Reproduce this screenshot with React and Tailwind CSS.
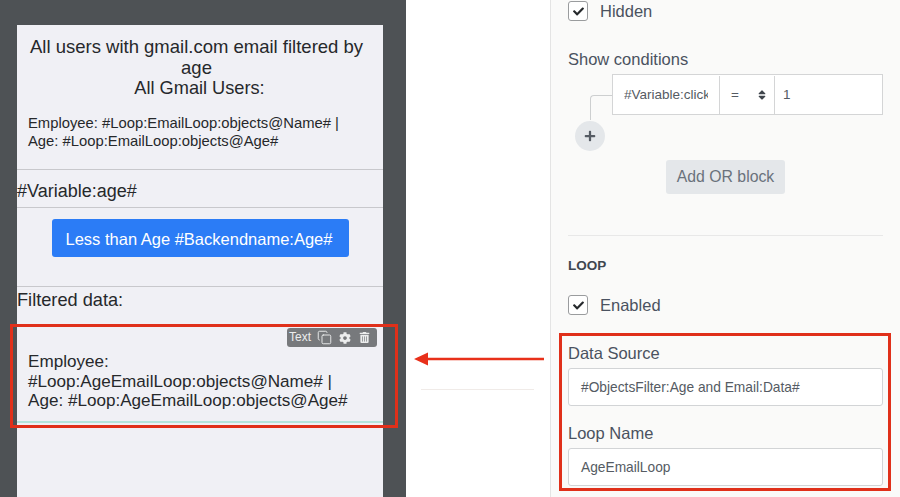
import React from 'react';
import { Copy } from 'lucide-react';
import { FaCheck, FaCog, FaPlus, FaSort, FaTrashAlt } from 'react-icons/fa';

const font = { fontFamily: '"Liberation Sans", Arial, sans-serif' };

const CheckRow = ({ label, className }) => (
  <div className={`flex items-center gap-3 ${className}`}>
    <div className="flex h-5 w-5 items-center justify-center rounded-[3px] border border-[#9a9c9e] bg-white">
      <FaCheck size={11} className="text-[#26292c]" />
    </div>
    <span className="text-[16.5px] leading-5 text-[#4a5260]">{label}</span>
  </div>
);

const Field = ({ label, value, className }) => (
  <div className={className}>
    <div className="text-[16.5px] leading-5 text-[#4a5260]">{label}</div>
    <div className="mt-[5px] flex h-[38px] items-center rounded-[3px] border border-[#d2d4d6] bg-white px-3 pt-[2px] text-[13.75px] text-[#555b63]">
      {value}
    </div>
  </div>
);

const App = () => {
  return (
    <div className="relative flex h-[497px] w-[900px] overflow-hidden bg-white" style={font}>
      {/* Phone preview */}
      <div className="h-full w-[406px] bg-[#4e5255] pl-[17px] pr-[23px] pt-[25px]">
        <div className="h-full bg-[#f0f0f5] text-[#26282b]">
          <div className="h-[145px] border-b border-[#c8c8cc] pt-[12px]">
            <div className="pl-[1px] pr-[8px] text-center text-[18.5px] leading-[20.5px]">
              All users with gmail.com email filtered by age
              <div className="pl-[6px] text-[18.2px]">All Gmail Users:</div>
            </div>
            <div className="mt-[15.5px] pl-[11px] pr-[30px] text-[14.8px] leading-[18px]">
              Employee: #Loop:EmailLoop:objects@Name# | Age: #Loop:EmailLoop:objects@Age#
            </div>
          </div>
          <div className="flex h-[38px] items-center border-b border-[#c8c8cc] pt-[6px] text-[18px]">#Variable:age#</div>
          <div className="flex h-[79px] items-start justify-center border-b border-[#c8c8cc] pt-[11px]">
            <div className="flex h-[38px] w-[297px] items-center justify-center rounded-[3px] bg-[#2b7cf6] pr-[2px] pt-[2px] text-[16.5px] text-white">
              Less than Age #Backendname:Age#
            </div>
          </div>
          <div className="pt-[3px] text-[18.2px] leading-[21px]">Filtered data:</div>
          <div className="relative mt-[14px] h-[98px] border-b-2 border-[#b4e4dc] pl-[11px] pr-[15px] pt-[27px] text-[17.1px] leading-[19.5px]">
            Employee:
            <br />
            #Loop:AgeEmailLoop:objects@Name# |
            <br />
            Age: #Loop:AgeEmailLoop:objects@Age#
            <div className="absolute right-[6px] top-[3px] flex h-[19px] w-[90px] items-center rounded-[3px] bg-[#77797c] pl-[2px] text-[12px] text-[#eceded]">
              <span>Text</span>
              <Copy size={15} strokeWidth={1.5} className="ml-[6px]" />
              <FaCog size={12} className="ml-[7px]" />
              <FaTrashAlt size={11} className="ml-[8px]" />
            </div>
          </div>
        </div>
      </div>

      {/* Gap between the two views */}
      <div className="w-[144px] bg-white" />

      {/* Properties panel */}
      <div className="w-[350px] border-l border-[#e4e4e4] bg-[#fafaf9] pl-[17px] pr-[17px] pt-px">
        <CheckRow label="Hidden" />
        <div className="mt-[28px] text-[16.5px] leading-5 text-[#4a5260]">Show conditions</div>
        <div className="relative mt-[5px] h-[76px]">
          <div className="ml-[44px] flex h-[41px] w-[271px] border border-[#d4d5d6] bg-white pt-px text-[13.5px] text-[#555b63]">
            <div className="flex w-[107px] items-center whitespace-nowrap border-r border-[#d4d5d6] pl-[11px] pr-[11px]">
              <span className="block w-full overflow-hidden">#Variable:click</span>
            </div>
            <div className="flex w-[55px] items-center justify-between border-r border-[#d4d5d6] pl-[11px] pr-[6px]">
              <span>=</span>
              <FaSort size={12} className="text-[#3e444b]" />
            </div>
            <div className="flex flex-1 items-center pl-[8px]">1</div>
          </div>
          <div className="absolute left-[22px] top-[21px] h-[25px] w-[22px] rounded-tl-[4px] border-l border-t border-[#cdcfd0]" />
          <div className="absolute left-[7px] top-[47px] flex h-[30px] w-[30px] items-center justify-center rounded-full bg-[#e4e7ea] text-[#555b63]">
            <FaPlus size={12} />
          </div>
        </div>
        <div className="mt-[10px] flex justify-center">
          <div className="flex h-[34px] w-[119px] items-center justify-center rounded-[3px] bg-[#e4e7ea] text-[15.8px] text-[#6a727c]">
            Add OR block
          </div>
        </div>
        <div className="mt-[41px] border-t border-[#e8e8e8]" />
        <div className="mt-[22px] text-[13.5px] font-bold leading-[15px] text-[#3f4650]">LOOP</div>
        <CheckRow label="Enabled" className="mt-[22px]" />
        <Field label="Data Source" value="#ObjectsFilter:Age and Email:Data#" className="mt-[28px]" />
        <Field label="Loop Name" value="AgeEmailLoop" className="mt-[17px]" />
      </div>

      {/* Annotations */}
      <div className="absolute left-[10px] top-[324px] h-[104px] w-[388px] border-[3px] border-[#e0301a]" />
      <div className="absolute left-[559px] top-[333px] h-[158px] w-[332px] border-[3px] border-[#e0301a]" />
      <svg className="absolute left-[412px] top-[350px]" width="134" height="18" viewBox="0 0 134 18">
        <path d="M2 9 L16 2.5 V7.8 H132 V10.2 H16 V15.5 Z" fill="#e8301a" />
      </svg>
      <div className="absolute left-[421px] top-[389px] h-px w-[113px] bg-[#f0ebe8]" />
    </div>
  );
};

export default App;
